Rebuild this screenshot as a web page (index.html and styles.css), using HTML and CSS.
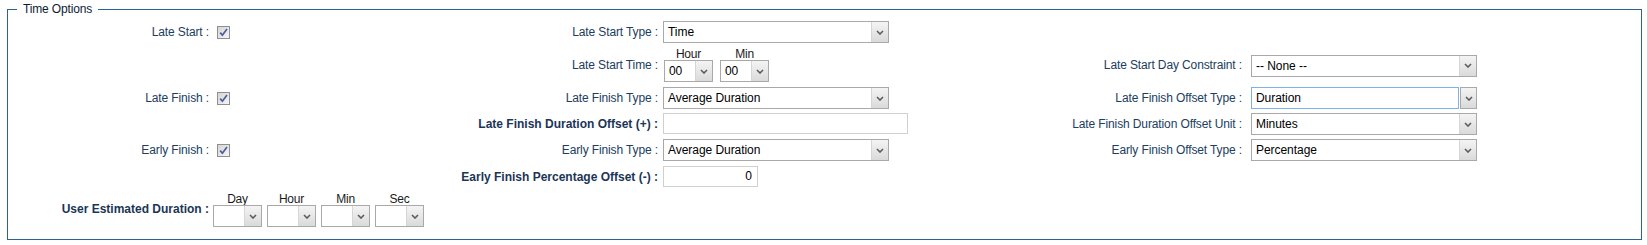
FILE: index.html
```html
<!DOCTYPE html>
<html>
<head>
<meta charset="utf-8">
<link rel="stylesheet" href="styles.css">
</head>
<body>
<fieldset class="box">
  <legend class="legend">Time Options</legend>
  <div class="grid">
    <!-- row 1 -->
    <div class="lbl c1">Late Start :</div>
    <div class="ctl chkcell c2"><span class="chk"><svg width="13" height="13" viewBox="0 0 13 13"><defs><linearGradient id="g1" x1="0" y1="0" x2="1" y2="1"><stop offset="0" stop-color="#d4d4d4"/><stop offset="1" stop-color="#f6f6f6"/></linearGradient></defs><rect x="0.5" y="0.5" width="12" height="12" fill="url(#g1)" stroke="#8f8f8f"/><path d="M3.2 6.6 L5.4 9.2 L10 3" fill="none" stroke="#4b5d9c" stroke-width="1.7"/></svg></span></div>
    <div class="lbl c3">Late Start Type :</div>
    <div class="ctl c4"><div class="sel w226"><span class="txt">Time</span><span class="arr"><svg width="8" height="5" viewBox="0 0 8 5"><path d="M1 1 L4 4 L7 1" fill="none" stroke="#5c5c5c" stroke-width="1.6"/></svg></span></div></div>

    <!-- row 2 -->
    <div class="lbl c3">Late Start Time :</div>
    <div class="ctl c4">
      <div class="grp time">
        <div class="unit"><div class="hdr">Hour</div><div class="sel w49"><span class="txt">00</span><span class="arr"><svg width="8" height="5" viewBox="0 0 8 5"><path d="M1 1 L4 4 L7 1" fill="none" stroke="#5c5c5c" stroke-width="1.6"/></svg></span></div></div>
        <div class="unit"><div class="hdr">Min</div><div class="sel w49"><span class="txt">00</span><span class="arr"><svg width="8" height="5" viewBox="0 0 8 5"><path d="M1 1 L4 4 L7 1" fill="none" stroke="#5c5c5c" stroke-width="1.6"/></svg></span></div></div>
      </div>
    </div>
    <div class="lbl c5">Late Start Day Constraint :</div>
    <div class="ctl mid c6"><div class="sel w226"><span class="txt">-- None --</span><span class="arr"><svg width="8" height="5" viewBox="0 0 8 5"><path d="M1 1 L4 4 L7 1" fill="none" stroke="#5c5c5c" stroke-width="1.6"/></svg></span></div></div>

    <!-- row 3 -->
    <div class="lbl c1">Late Finish :</div>
    <div class="ctl chkcell c2"><span class="chk"><svg width="13" height="13" viewBox="0 0 13 13"><rect x="0.5" y="0.5" width="12" height="12" fill="url(#g1)" stroke="#8f8f8f"/><path d="M3.2 6.6 L5.4 9.2 L10 3" fill="none" stroke="#4b5d9c" stroke-width="1.7"/></svg></span></div>
    <div class="lbl c3">Late Finish Type :</div>
    <div class="ctl c4"><div class="sel w226"><span class="txt">Average Duration</span><span class="arr"><svg width="8" height="5" viewBox="0 0 8 5"><path d="M1 1 L4 4 L7 1" fill="none" stroke="#5c5c5c" stroke-width="1.6"/></svg></span></div></div>
    <div class="lbl c5">Late Finish Offset Type :</div>
    <div class="ctl c6"><div class="sel w226 focus"><span class="txt">Duration</span><span class="arr"><svg width="8" height="5" viewBox="0 0 8 5"><path d="M1 1 L4 4 L7 1" fill="none" stroke="#5c5c5c" stroke-width="1.6"/></svg></span></div></div>

    <!-- row 4 -->
    <div class="lbl bold c3">Late Finish Duration Offset (+) :</div>
    <div class="ctl c4"><div class="inp w245"></div></div>
    <div class="lbl c5">Late Finish Duration Offset Unit :</div>
    <div class="ctl c6"><div class="sel w226"><span class="txt">Minutes</span><span class="arr"><svg width="8" height="5" viewBox="0 0 8 5"><path d="M1 1 L4 4 L7 1" fill="none" stroke="#5c5c5c" stroke-width="1.6"/></svg></span></div></div>

    <!-- row 5 -->
    <div class="lbl c1">Early Finish :</div>
    <div class="ctl chkcell c2"><span class="chk"><svg width="13" height="13" viewBox="0 0 13 13"><rect x="0.5" y="0.5" width="12" height="12" fill="url(#g1)" stroke="#8f8f8f"/><path d="M3.2 6.6 L5.4 9.2 L10 3" fill="none" stroke="#4b5d9c" stroke-width="1.7"/></svg></span></div>
    <div class="lbl c3">Early Finish Type :</div>
    <div class="ctl c4"><div class="sel w226"><span class="txt">Average Duration</span><span class="arr"><svg width="8" height="5" viewBox="0 0 8 5"><path d="M1 1 L4 4 L7 1" fill="none" stroke="#5c5c5c" stroke-width="1.6"/></svg></span></div></div>
    <div class="lbl c5">Early Finish Offset Type :</div>
    <div class="ctl c6"><div class="sel w226"><span class="txt">Percentage</span><span class="arr"><svg width="8" height="5" viewBox="0 0 8 5"><path d="M1 1 L4 4 L7 1" fill="none" stroke="#5c5c5c" stroke-width="1.6"/></svg></span></div></div>

    <!-- row 6 -->
    <div class="lbl bold c3">Early Finish Percentage Offset (-) :</div>
    <div class="ctl c4"><div class="inp w95 num">0</div></div>

    <!-- row 7 -->
    <div class="lbl bold c1 up">User Estimated Duration :</div>
    <div class="ctl c2">
      <div class="grp dur">
        <div class="unit"><div class="hdr">Day</div><div class="sel w49"><span class="txt"></span><span class="arr"><svg width="8" height="5" viewBox="0 0 8 5"><path d="M1 1 L4 4 L7 1" fill="none" stroke="#5c5c5c" stroke-width="1.6"/></svg></span></div></div>
        <div class="unit"><div class="hdr">Hour</div><div class="sel w49"><span class="txt"></span><span class="arr"><svg width="8" height="5" viewBox="0 0 8 5"><path d="M1 1 L4 4 L7 1" fill="none" stroke="#5c5c5c" stroke-width="1.6"/></svg></span></div></div>
        <div class="unit"><div class="hdr">Min</div><div class="sel w49"><span class="txt"></span><span class="arr"><svg width="8" height="5" viewBox="0 0 8 5"><path d="M1 1 L4 4 L7 1" fill="none" stroke="#5c5c5c" stroke-width="1.6"/></svg></span></div></div>
        <div class="unit"><div class="hdr">Sec</div><div class="sel w49"><span class="txt"></span><span class="arr"><svg width="8" height="5" viewBox="0 0 8 5"><path d="M1 1 L4 4 L7 1" fill="none" stroke="#5c5c5c" stroke-width="1.6"/></svg></span></div></div>
      </div>
    </div>
  </div>
</fieldset>
</body>
</html>
```

FILE: styles.css
```css
html, body {
  margin: 0;
  padding: 0;
  background: #ffffff;
}

body {
  font-family: "Liberation Sans", Arial, sans-serif;
  font-size: 12px;
  color: #000;
}

.box {
  margin: 2px 5px 0 7px;
  padding: 0 0 12px 0;
  border: 1px solid #2d6299;
  min-width: 0;
}

.legend {
  margin-left: 9px;
  padding: 0 6px;
  line-height: 14px;
  font-size: 12px;
  color: #0d1b36;
  letter-spacing: -0.15px;
}

.grid {
  display: grid;
  grid-template-columns: 203px 219px 230px 250px 334px 1fr;
  grid-template-rows: 22px 34px 21px 21px 22px 22px 34px;
  row-gap: 5px;
  align-items: center;
  margin-top: 5px;
}

.c1 { grid-column: 1; }
.c2 { grid-column: 2; }
.c3 { grid-column: 3; }
.c4 { grid-column: 4; }
.c5 { grid-column: 5; }
.c6 { grid-column: 6; }

.lbl {
  text-align: right;
  padding-right: 2px;
  color: #213d5e;
  letter-spacing: -0.12px;
  white-space: nowrap;
  line-height: 14px;
}

.lbl.bold {
  font-weight: bold;
  color: #1b3556;
  letter-spacing: 0;
}

.lbl.up {
  padding-bottom: 3px;
}

.ctl {
  display: flex;
  align-items: center;
  align-self: start;
}

.ctl.mid {
  align-self: center;
  padding-top: 1px;
}

.ctl.chkcell {
  height: 22px;
}

.c2 { padding-left: 2px; }
.c4 { padding-left: 3px; }
.c6 { padding-left: 7px; }

.chk {
  display: block;
  width: 13px;
  height: 13px;
  margin-left: 4px;
}

.chk svg { display: block; }

.sel {
  display: flex;
  height: 22px;
  box-sizing: border-box;
  border: 1px solid #a9a9a9;
  background: #fff;
}

.sel .txt {
  flex: 1;
  padding-left: 4px;
  line-height: 20px;
  font-size: 12px;
  letter-spacing: -0.05px;
  color: #000;
  white-space: nowrap;
  overflow: hidden;
}

.sel .arr {
  width: 17px;
  box-sizing: border-box;
  border-left: 1px solid #d6d6d6;
  background: linear-gradient(#f4f4f4, #dadada);
  display: flex;
  align-items: center;
  justify-content: center;
}

.sel .arr svg { display: block; }

.sel.focus {
  border: none;
}

.sel.focus .txt {
  border: 1px solid #7db2e8;
  line-height: 20px;
  padding-left: 4px;
}

.sel.focus .arr {
  width: 17px;
  margin-left: 1px;
  border: 1px solid #a9a9a9;
}

.w226 { width: 226px; }
.w49 { width: 49px; }
.w245 { width: 245px; }
.w95 { width: 95px; }

.inp {
  height: 21px;
  box-sizing: border-box;
  border: 1px solid #d0d0d0;
  background: #fff;
  line-height: 19px;
  font-size: 12px;
  color: #000;
}

.inp.num {
  text-align: right;
  padding-right: 5px;
}

.grp {
  display: flex;
}

.grp.time {
  gap: 7px;
  margin-left: 1px;
}

.grp.dur {
  gap: 5px;
}

.unit {
  display: flex;
  flex-direction: column;
  align-items: stretch;
}

.hdr {
  height: 12px;
  line-height: 12px;
  text-align: center;
  color: #1a1a1a;
  font-size: 12px;
  letter-spacing: -0.2px;
}
```
